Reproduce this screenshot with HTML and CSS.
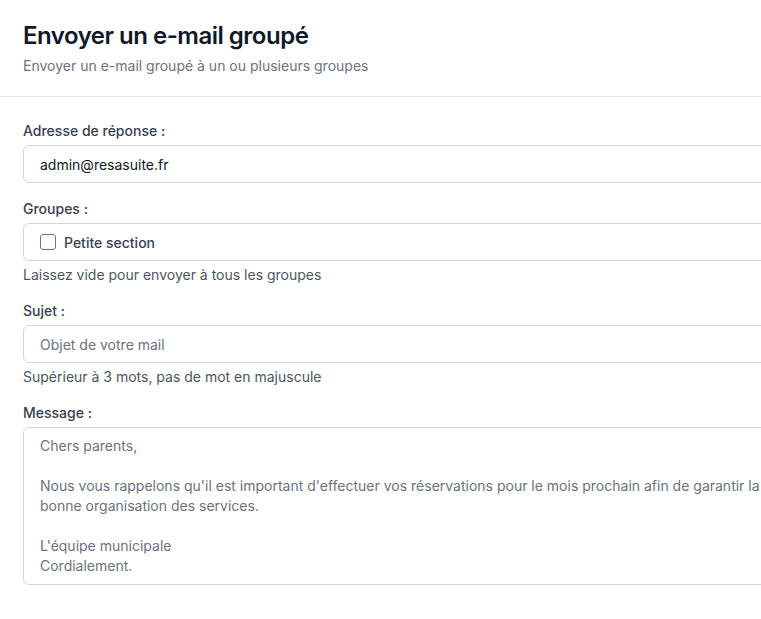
FILE: index.html
```html
<!DOCTYPE html>
<html lang="fr">
<head>
<meta charset="utf-8">
<link rel="stylesheet" href="styles.css">
</head>
<body>
<div class="page">
  <header class="head">
    <h1 class="title">Envoyer un e-mail groupé</h1>
    <p class="subtitle">Envoyer un e-mail groupé à un ou plusieurs groupes</p>
  </header>
  <form class="form">
    <div class="field">
      <label class="label">Adresse de réponse :</label>
      <div class="input">admin@resasuite.fr</div>
    </div>
    <div class="field">
      <label class="label">Groupes :</label>
      <div class="input checks">
        <label class="check"><span class="box"></span><span>Petite section</span></label>
      </div>
      <p class="help">Laissez vide pour envoyer à tous les groupes</p>
    </div>
    <div class="field">
      <label class="label">Sujet :</label>
      <div class="input placeholder">Objet de votre mail</div>
      <p class="help">Supérieur à 3 mots, pas de mot en majuscule</p>
    </div>
    <div class="field">
      <label class="label">Message :</label>
      <div class="textarea">Chers parents,

Nous vous rappelons qu'il est important d'effectuer vos réservations pour le mois prochain afin de garantir la bonne organisation des services.

L'équipe municipale
Cordialement.</div>
    </div>
  </form>
</div>
</body>
</html>
```
FILE: styles.css
```css
html, body { margin: 0; padding: 0; background: #fff; overflow: hidden; }
body { font-family: Inter, "Noto Sans", sans-serif; color: #111827; }
.page { width: 800px; }
.head { padding: 20px 23px 20px; border-bottom: 1px solid #e5e7eb; width: 738px; }
.title { margin: 0; font-size: 24px; line-height: 32px; font-weight: 600; color: #111827; letter-spacing: -0.5px; }
.subtitle { margin: 4px 0 0; font-size: 14px; line-height: 20px; color: #6b7280; }
.form { padding: 24px 23px; display: flex; flex-direction: column; gap: 16px; }
.field { display: flex; flex-direction: column; }
.label { font-size: 14px; line-height: 20px; font-weight: 500; color: #374151; margin-bottom: 4px; }
.input { box-sizing: border-box; height: 38px; border: 1px solid #d1d5db; border-radius: 6px; padding: 0 16px; display: flex; align-items: center; font-size: 14px; color: #111827; }
.placeholder { color: #6b7280; }
.check { display: flex; align-items: center; gap: 8px; font-weight: 500; color: #374151; font-size: 14px; }
.box { width: 14px; height: 14px; border: 1px solid #6b7280; border-radius: 3px; background: #fff; }
.help { margin: 4px 0 0; font-size: 14px; line-height: 20px; color: #4b5563; }
.textarea { box-sizing: border-box; border: 1px solid #d1d5db; border-radius: 6px; padding: 8px 16px 8px; font-size: 14px; line-height: 20px; color: #6b7280; white-space: pre-wrap; height: 158px; }
```
